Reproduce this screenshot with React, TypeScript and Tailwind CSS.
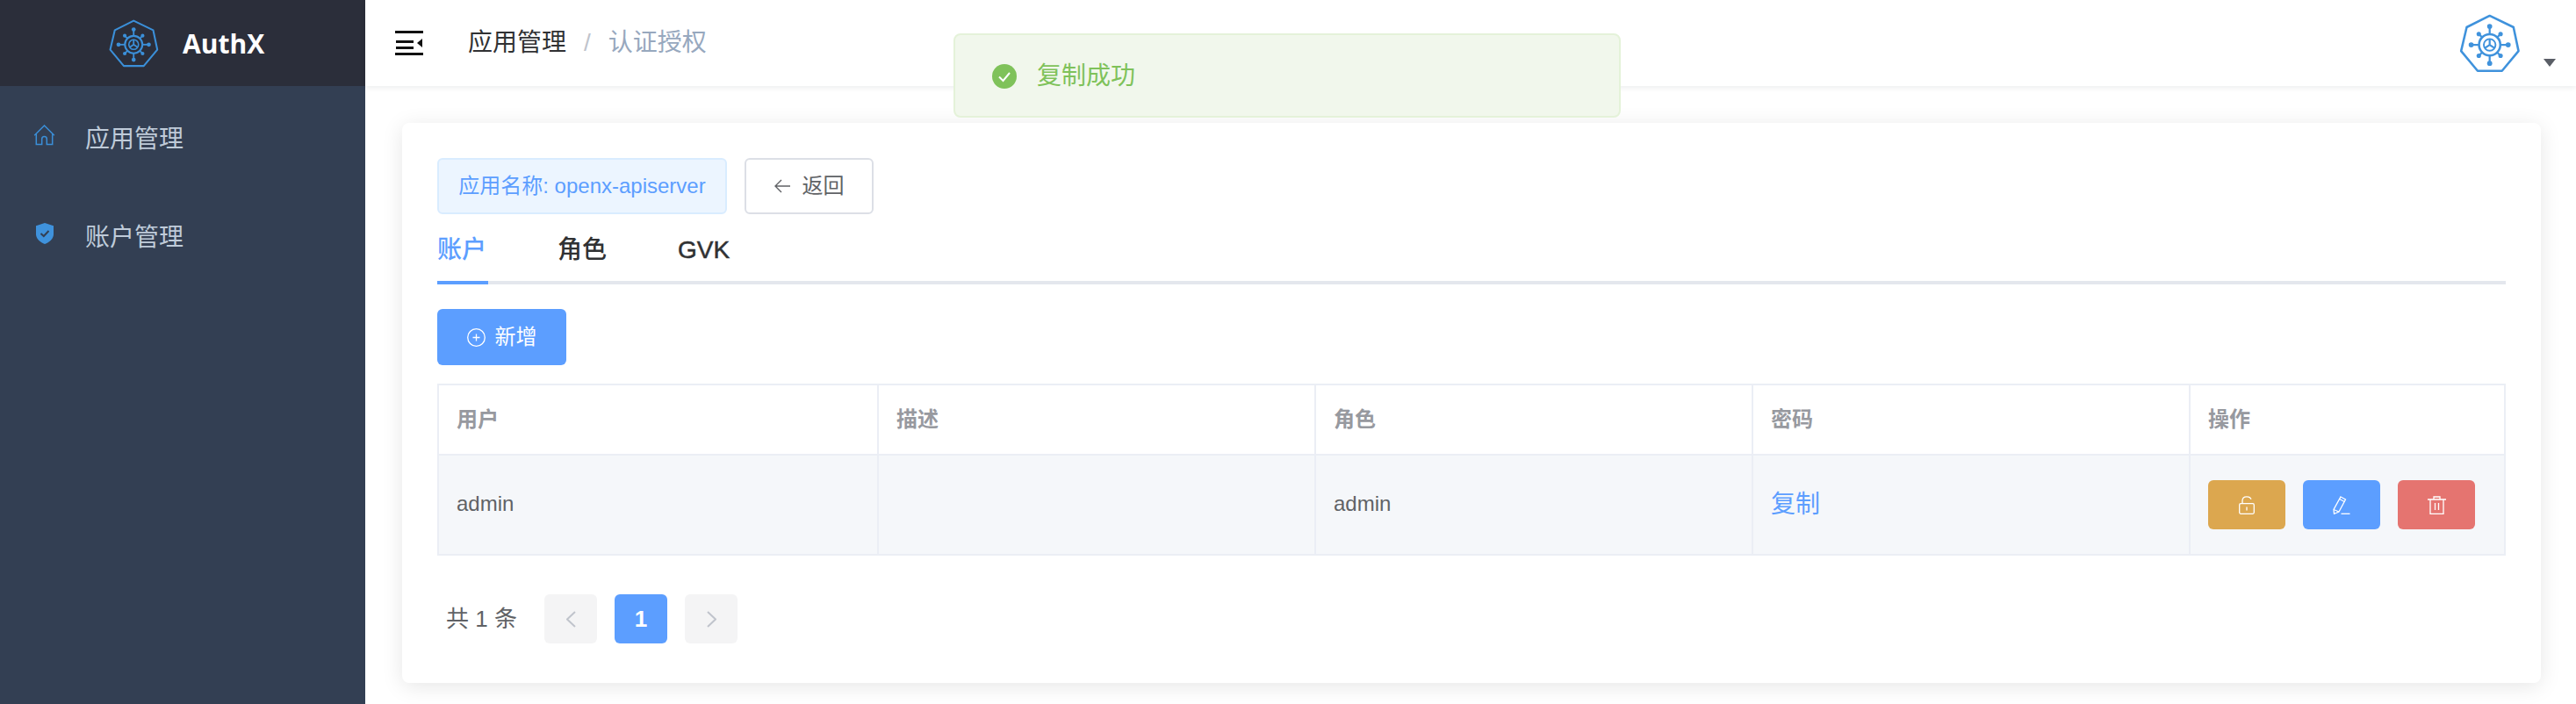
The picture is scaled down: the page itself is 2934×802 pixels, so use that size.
import React from "react";

const FONT = '"Liberation Sans","Noto Sans CJK SC",sans-serif';

function Logo({ className, stroke }: { className: string; stroke: string }) {
  const spokes = [0, 45, 90, 135, 180, 225, 270, 315];
  return (
    <svg viewBox="120 38 218 210" className={className} fill="none" stroke={stroke}>
      <polygon points="228,44 313,85 331,170 272,241 185,241 126,170 146,85" strokeWidth="8" strokeLinejoin="round" />
      <circle cx="228" cy="148" r="38" strokeWidth="8" />
      <circle cx="228" cy="148" r="21" strokeWidth="6" />
      <path d="M228 127V148M228 148L210 160M228 148L246 160" strokeWidth="7" />
      {spokes.map((a) => {
        const len = a % 90 === 0 ? 66 : 55;
        const r = (a * Math.PI) / 180;
        const x1 = 228 + Math.cos(r) * 38;
        const y1 = 148 + Math.sin(r) * 38;
        const x2 = 228 + Math.cos(r) * len;
        const y2 = 148 + Math.sin(r) * len;
        return (
          <g key={a}>
            <line x1={x1} y1={y1} x2={x2} y2={y2} strokeWidth="7" />
            <circle cx={x2} cy={y2} r={a % 90 === 0 ? 9 : 8} fill={stroke} stroke="none" />
          </g>
        );
      })}
    </svg>
  );
}

function HomeIcon() {
  return (
    <svg viewBox="0 0 24 24" className="w-[25px] h-[24px]" fill="none" stroke="#3b8fd8" strokeWidth="1.5">
      <path d="M0.7 12.2L12 1L23.3 12.2" />
      <path d="M2.8 10.5V22.5H9.2V16.5Q9.2 13.5 12 13.5Q14.8 13.5 14.8 16.5V22.5H21.2V10.5" />
    </svg>
  );
}

function ShieldIcon() {
  return (
    <svg viewBox="0 0 20 24" className="w-[20px] h-[24px]">
      <path d="M10 0L20 3.2V13C20 18 15 22 10 24C5 22 0 18 0 13V3.2Z" fill="#3f92dc" />
      <path d="M5.5 12L8.8 15L14.5 9" fill="none" stroke="#333f53" strokeWidth="2" />
    </svg>
  );
}

function Hamburger() {
  return (
    <svg viewBox="0 0 32 28" className="w-[32px] h-[28px]">
      <rect x="0" y="0" width="32" height="3" fill="#111" />
      <rect x="1" y="11" width="20" height="3" fill="#111" />
      <rect x="1" y="18" width="20" height="3" fill="#111" />
      <rect x="0" y="25" width="32" height="3" fill="#111" />
      <polygon points="25,14 31,9 31,19" fill="#111" />
    </svg>
  );
}

function SuccessIcon() {
  return (
    <svg viewBox="0 0 28 28" className="w-[28px] h-[28px]">
      <circle cx="14" cy="14" r="14" fill="#7fc25a" />
      <path d="M8 14.5L12.5 19L20 10" fill="none" stroke="#fff" strokeWidth="2" />
    </svg>
  );
}

function LockIcon() {
  return (
    <svg viewBox="0 0 18 21" className="w-[18px] h-[21px]" fill="none" stroke="#fff" strokeWidth="1.3">
      <rect x="0.7" y="8.7" width="16.6" height="11.6" rx="1.5" />
      <path d="M4 8.5V5.5Q4 0.8 9 0.8Q13 0.8 14 3.8" />
      <path d="M9 12.5V16.5" />
    </svg>
  );
}

function PencilIcon() {
  return (
    <svg viewBox="0 0 20 21" className="w-[20px] h-[21px]" fill="none" stroke="#fff" strokeWidth="1.3">
      <path d="M9 1L14.5 4L7 18L1.5 20.3L1 15.5Z" />
      <path d="M7.7 3.5L13.2 6.5M1 15.5L7 18" />
      <path d="M9.5 20.3H19.5" />
    </svg>
  );
}

function TrashIcon() {
  return (
    <svg viewBox="0 0 21 21" className="w-[21px] h-[21px]" fill="none" stroke="#fff" strokeWidth="1.3">
      <path d="M0 4H21M7 4V1H14V4" />
      <path d="M3 4V20.3H18V4" />
      <path d="M8.5 8V16M12.5 8V16" />
    </svg>
  );
}

function PlusCircle() {
  return (
    <svg viewBox="0 0 21 21" className="w-[21px] h-[21px]" fill="none" stroke="#fff" strokeWidth="1.3">
      <circle cx="10.5" cy="10.5" r="9.8" />
      <path d="M10.5 6.5V14.5M6.5 10.5H14.5" />
    </svg>
  );
}

function ArrowLeft() {
  return (
    <svg viewBox="0 0 18 16" className="w-[18px] h-[16px]" fill="none" stroke="#606266" strokeWidth="1.4">
      <path d="M8 1L1 8L8 15M1 8H18" />
    </svg>
  );
}

function Chevron({ right }: { right?: boolean }) {
  return (
    <svg viewBox="0 0 11 19" className="w-[11px] h-[19px]" fill="none" stroke="#c0c4cc" strokeWidth="2">
      <path d={right ? "M1 1L10 9.5L1 18" : "M10 1L1 9.5L10 18"} />
    </svg>
  );
}

export default function App() {
  return (
    <div className="relative flex h-[802px] w-full overflow-hidden bg-white" style={{ fontFamily: FONT }}>
      <aside className="flex w-[416px] shrink-0 flex-col bg-[#333f53]">
        <div className="flex h-[98px] items-center bg-[#2b2e3a] pl-[124px]">
          <Logo className="h-[55px] w-[57px]" stroke="#3b8fd8" />
          <span className="ml-[27px] text-[30px] font-bold text-white" style={{ fontFamily: '"Open Sans",sans-serif' }}>AuthX</span>
        </div>
        <nav className="flex flex-col pt-[5px]">
          <a className="flex h-[112px] items-center pl-[38px]">
            <span className="flex w-[25px] -translate-y-[5px] justify-center"><HomeIcon /></span>
            <span className="ml-[34px] text-[28px] text-[#bfcbd9]">应用管理</span>
          </a>
          <a className="flex h-[112px] items-center pl-[38px]">
            <span className="flex w-[25px] -translate-y-[5px] justify-center"><ShieldIcon /></span>
            <span className="ml-[34px] text-[28px] text-[#bfcbd9]">账户管理</span>
          </a>
        </nav>
      </aside>

      <div className="flex min-w-0 flex-1 flex-col">
        <header className="relative z-10 flex h-[98px] shrink-0 items-center bg-white pl-[34px] pr-[23px] shadow-[0_2px_6px_rgba(0,21,41,0.08)]">
          <Hamburger />
          <div className="ml-[51px] flex items-center text-[28px]">
            <span className="text-[#303133]">应用管理</span>
            <span className="ml-[20px] mr-[20px] text-[#c0c4cc]">/</span>
            <span className="text-[#97a8be]">认证授权</span>
          </div>
          <div className="ml-auto flex items-center">
            <Logo className="h-[67px] w-[70px]" stroke="#3f92dc" />
            <span className="ml-[26px] mt-[44px] h-0 w-0 border-x-[7px] border-t-[9px] border-x-transparent border-t-[#5a5e66]" />
          </div>
        </header>

        <main className="pl-[42px] pr-[40px] pt-[42px]">
          <section className="flex h-[638px] flex-col rounded-[8px] bg-white px-[40px] pt-[40px] shadow-[0_4px_24px_rgba(0,0,0,0.1)]">
            <div className="flex h-[64px] gap-[20px]">
              <span className="flex w-[330px] items-center justify-center rounded-[6px] border-2 border-[#d9ecff] bg-[#ecf5ff] text-[24px] text-[#5c9eff]">
                应用名称: openx-apiserver
              </span>
              <button className="flex w-[147px] items-center justify-center gap-[14px] rounded-[6px] border-2 border-[#dcdfe6] bg-white text-[24px] text-[#606266]">
                <ArrowLeft />
                返回
              </button>
            </div>

            <div className="flex h-[80px] border-b-4 border-[#e4e7ed] text-[28px] font-medium text-[#303133]">
              <span className="-mb-[4px] flex w-[58px] items-center border-b-4 border-[#5c9eff] pt-[6px] text-[#5c9eff]">账户</span>
              <span className="ml-[79px] flex items-center pt-[6px]">角色</span>
              <span className="ml-[81px] flex items-center pt-[6px] [-webkit-text-stroke:0.5px_#303133]">GVK</span>
            </div>

            <button className="mt-[28px] flex h-[64px] w-[147px] items-center justify-center gap-[11px] rounded-[6px] bg-[#5c9eff] text-[24px] text-white">
              <PlusCircle />
              新增
            </button>

            <table className="mt-[21px] w-full table-fixed border-collapse text-left text-[24px]">
              <colgroup>
                <col className="w-[501px]" />
                <col className="w-[498px]" />
                <col className="w-[498px]" />
                <col className="w-[498px]" />
                <col />
              </colgroup>
              <thead>
                <tr className="h-[80px] font-semibold text-[#97999f]">
                  {["用户", "描述", "角色", "密码", "操作"].map((h) => (
                    <th key={h} className="border-2 border-[#ebeef5] pl-[20px] font-semibold">{h}</th>
                  ))}
                </tr>
              </thead>
              <tbody>
                <tr className="h-[114px] bg-[#f5f7fa] text-[#606266]">
                  <td className="border-2 border-[#ebeef5] pl-[20px]"><span className="relative -top-[1px]">admin</span></td>
                  <td className="border-2 border-[#ebeef5] pl-[20px]"></td>
                  <td className="border-2 border-[#ebeef5] pl-[20px]"><span className="relative -top-[1px]">admin</span></td>
                  <td className="border-2 border-[#ebeef5] pl-[20px] text-[28px] text-[#5c9eff]">复制</td>
                  <td className="border-2 border-[#ebeef5] pl-[20px]">
                    <div className="flex gap-[20px]">
                      <button className="flex h-[56px] w-[88px] items-center justify-center rounded-[6px] bg-[#dca74f]"><LockIcon /></button>
                      <button className="flex h-[56px] w-[88px] items-center justify-center rounded-[6px] bg-[#5c9eff]"><PencilIcon /></button>
                      <button className="flex h-[56px] w-[88px] items-center justify-center rounded-[6px] bg-[#e57470]"><TrashIcon /></button>
                    </div>
                  </td>
                </tr>
              </tbody>
            </table>

            <div className="mt-[44px] flex h-[56px] items-center">
              <span className="ml-[10px] w-[112px] text-[26px] text-[#606266]">共 1 条</span>
              <div className="flex gap-[20px]">
                <button className="flex h-[56px] w-[60px] items-center justify-center rounded-[6px] bg-[#f4f4f5]"><Chevron /></button>
                <button className="h-[56px] w-[60px] rounded-[6px] bg-[#5c9eff] text-[26px] font-bold text-white">1</button>
                <button className="flex h-[56px] w-[60px] items-center justify-center rounded-[6px] bg-[#f4f4f5]"><Chevron right /></button>
              </div>
            </div>
          </section>
        </main>
      </div>

      <div className="absolute left-[1086px] top-[38px] z-20 flex h-[96px] w-[760px] items-center rounded-[8px] border-2 border-[#e4f2d9] bg-[#f1f7ec] pl-[42px] pt-[2px]">
        <SuccessIcon />
        <span className="ml-[23px] text-[28px] text-[#7fc25a]">复制成功</span>
      </div>
    </div>
  );
}
